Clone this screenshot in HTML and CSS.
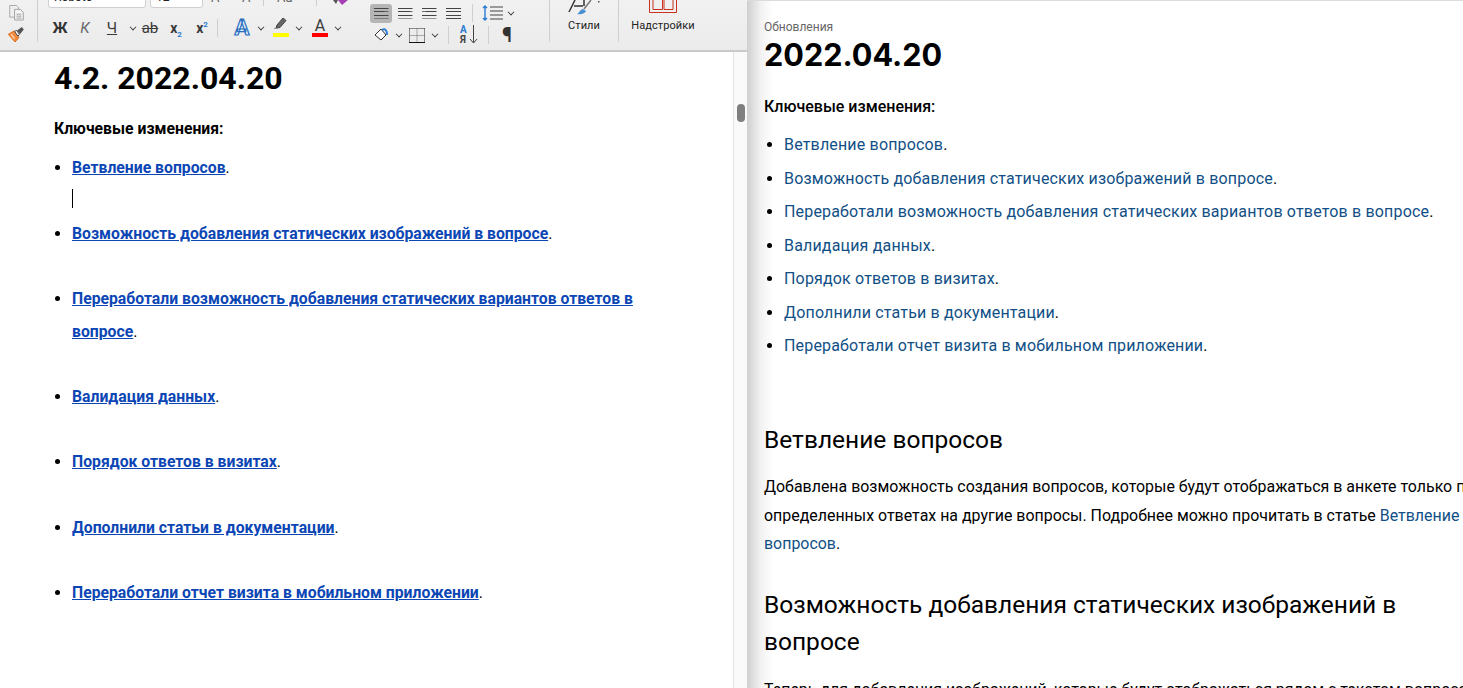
FILE: index.html
```html
<!DOCTYPE html>
<html lang="ru">
<head>
<meta charset="UTF-8">
<title>Обновления</title>
<link rel="stylesheet" href="styles.css">
</head>
<body>
<div class="app">
    <div class="word">
        <div class="ribbon">
            <div class="group group-paste">
                <svg width="17" height="16" viewBox="0 0 17 16"><path d="M1.500.5h7l2 2v10h-9z" fill="#efefef" stroke="#a8a8a8"/><path d="M6.500 4.500h6l3 3v8h-9z" fill="#f4f4f4" stroke="#a0a0a0"/><path d="M8.500 9.500h5M8.500 11.500h5M8.500 13.500h5" stroke="#a0a0a0"/></svg>
                <svg width="17" height="16" viewBox="0 0 17 16"><path d="M0 7.500l6-3.500 5 7-4 4.500z" fill="#f08a3c" stroke="#e0701f"/><path d="M3 7.500l3.500 4.500" stroke="#fbd3b0" stroke-width="1.500"/><path d="M6.500 4.500l2-1 3 4-1.500 2z" fill="#fff" stroke="#444"/><path d="M9 3.500l5-3.500 2 2.500-4 5z" fill="#555"/></svg>
            </div>
            <div class="group group-font">
                <div class="row-top">
                    <span class="select select-font">Roboto</span>
                    <span class="select select-size">12</span>
                    <span class="top-glyph top-a1">A</span>
                    <span class="top-glyph top-a2">A</span>
                    <span class="v-sep"></span>
                    <span class="top-glyph top-aa">Aa</span>
                    <span class="v-sep"></span>
                    <svg class="top-clear" width="16" height="6" viewBox="0 0 16 6"><path d="M0 0l3 4 2-4z" fill="#555"/><path d="M5 0l4 5 6-5z" fill="#a33fb5"/></svg>
                </div>
                <div class="row-bottom">
                    <span class="tool t-bold">Ж</span>
                    <span class="tool t-italic">К</span>
                    <span class="tool t-under">Ч</span>
                    <span class="chev chev-under"></span>
                    <span class="tool t-strike">ab</span>
                    <span class="tool t-script">x<sub>2</sub></span>
                    <span class="tool t-script">x<sup>2</sup></span>
                    <span class="v-sep v-sep-gap"></span>
                    <span class="tool t-effect">A</span>
                    <span class="chev"></span>
                    <span class="tool t-color">
                        <svg width="16" height="12" viewBox="0 0 16 12"><path d="M3 11l1-3 6-7 3 2.500-6 7z" fill="#666" stroke="#444"/><path d="M1 11.500h4" stroke="#999"/></svg>
                        <i class="swatch swatch-yellow"></i>
                    </span>
                    <span class="chev chev-color"></span>
                    <span class="tool t-color t-fontcolor">A<i class="swatch swatch-red"></i></span>
                    <span class="chev chev-color"></span>
                </div>
            </div>
            <div class="group group-para">
                <div class="para-row">
                    <span class="align active"><i class="lines lines-left"></i></span>
                    <span class="align"><i class="lines lines-center"></i></span>
                    <span class="align"><i class="lines lines-right"></i></span>
                    <span class="align"><i class="lines lines-just"></i></span>
                    <span class="v-sep v-sep-para"></span>
                    <span class="spacing">
                        <svg width="22" height="16" viewBox="0 0 22 16"><path d="M3 1v14M1 3l2-2 2 2M1 13l2 2 2-2" fill="none" stroke="#2b7cd3" stroke-width="1.400"/><path d="M8 2h13M8 6h13M8 10h13M8 14h13" stroke="#444"/></svg>
                    </span>
                    <span class="chev chev-spacing"></span>
                </div>
                <div class="para-row para-row-2">
                    <svg class="fill" width="15" height="14" viewBox="0 0 15 14"><path d="M1 7l6-6 5 6-5 5z" fill="#fafafa" stroke="#333"/><path d="M8 2c3-2 5 0 5 5" fill="none" stroke="#2b7cd3" stroke-width="1.800"/></svg>
                    <span class="chev chev-fill"></span>
                    <svg class="borders" width="16" height="15" viewBox="0 0 16 15"><path d="M.5.5h15M.5.5v14M15.500.5v14" fill="none" stroke="#222" stroke-dasharray="1 1"/><path d="M8 .5v14M.5 7.500h15" stroke="#666" stroke-dasharray="1 1"/><path d="M0 14.500h16" stroke="#111"/></svg>
                    <span class="chev chev-border"></span>
                    <span class="v-sep v-sep-sort"></span>
                    <span class="sort"><b>A</b><b class="sort-ya">Я</b><svg width="9" height="19" viewBox="0 0 9 19"><path d="M4.500 0v18M1 14l3.500 4L8 14" fill="none" stroke="#444"/></svg></span>
                    <span class="v-sep v-sep-sort2"></span>
                    <span class="pilcrow">¶</span>
                </div>
            </div>
            <div class="group group-big group-styles">
                <svg width="36" height="15" viewBox="0 0 36 15"><path d="M3 12L9 0M18 0v6M8 6h9" fill="none" stroke="#333" stroke-width="1.500"/><path d="M11 14c2 0 2-4 6-5l3 2c-1 2-4 4-9 3z" fill="#4a8fd0"/><path d="M18 9l7-9" stroke="#777" stroke-width="1.500"/><path d="M32 1h1.500v1.500H32z" fill="#555"/></svg>
                <span class="big-label">Стили</span>
            </div>
            <div class="group group-big group-addins">
                <svg width="28" height="13" viewBox="0 0 28 13"><path d="M.5 0v12.500h27V0" fill="none" stroke="#c8321e"/><path d="M4 0v9.500h9.500V0M15 0v9.500h9V0" fill="none" stroke="#c8321e"/></svg>
                <span class="big-label">Надстройки</span>
            </div>
        </div>
        <div class="doc-wrap">
            <div class="doc">
                <h1 class="doc-title">4.2. 2022.04.20</h1>
                <p class="doc-lead">Ключевые изменения:</p>
                <ul class="doc-list">
                    <li><a href="#">Ветвление вопросов</a>.<span class="caret"></span></li>
                    <li><a href="#">Возможность добавления статических изображений в вопросе</a>.</li>
                    <li><a href="#">Переработали возможность добавления статических вариантов ответов в вопросе</a>.</li>
                    <li><a href="#">Валидация данных</a>.</li>
                    <li><a href="#">Порядок ответов в визитах</a>.</li>
                    <li><a href="#">Дополнили статьи в документации</a>.</li>
                    <li><a href="#">Переработали отчет визита в мобильном приложении</a>.</li>
                </ul>
            </div>
            <div class="scrollbar"><div class="thumb"></div></div>
        </div>
    </div>
    <div class="preview">
        <div class="crumb">Обновления</div>
        <h1 class="pv-title">2022.04.20</h1>
        <p class="pv-lead">Ключевые изменения:</p>
        <ul class="pv-list">
            <li><a href="#">Ветвление вопросов</a>.</li>
            <li><a href="#">Возможность добавления статических изображений в вопросе</a>.</li>
            <li><a href="#">Переработали возможность добавления статических вариантов ответов в вопросе</a>.</li>
            <li><a href="#">Валидация данных</a>.</li>
            <li><a href="#">Порядок ответов в визитах</a>.</li>
            <li><a href="#">Дополнили статьи в документации</a>.</li>
            <li><a href="#">Переработали отчет визита в мобильном приложении</a>.</li>
        </ul>
        <h2 class="pv-h2 pv-h2-first">Ветвление вопросов</h2>
        <p class="pv-text">Добавлена возможность создания вопросов, которые будут отображаться в анкете только при определенных ответах на другие вопросы. Подробнее можно прочитать в статье <a href="#">Ветвление вопросов</a>.</p>
        <h2 class="pv-h2">Возможность добавления статических изображений в вопросе</h2>
        <p class="pv-text">Теперь для добавления изображений, которые будут отображаться рядом с текстом вопроса</p>
    </div>
</div>
</body>
</html>
```

FILE: styles.css
```css
html, body {
    margin: 0;
    padding: 0;
    height: 100%;
    overflow: hidden;
    background: #fff;
}
.app {
    display: flex;
    height: 688px;
    font-family: Roboto, "Noto Sans", sans-serif;
    color: #000;
}
a {
    color: inherit;
}

/* left window */
.word {
    width: 747px;
    flex: none;
    display: flex;
    flex-direction: column;
}
.ribbon {
    height: 50px;
    flex: none;
    display: flex;
    background: linear-gradient(#f1f1f1, #ebebeb);
    border-bottom: 2px solid #c9c9c9;
    overflow: hidden;
    color: #3a3a3a;
}
.group {
    flex: none;
    box-sizing: border-box;
    height: 42px;
    border-right: 1px solid #cfcfcf;
}
.group-paste {
    width: 38px;
    display: flex;
    flex-direction: column;
    align-items: center;
    padding: 5px 5px 0 0;
    gap: 6px;
}
.group-font {
    width: 322px;
    padding-left: 10px;
    border-right: 0;
}
.row-top {
    height: 9px;
    display: flex;
    align-items: flex-start;
}
.select {
    box-sizing: border-box;
    height: 18px;
    margin-top: -10px;
    background: #fff;
    border: 1px solid #cfcfcf;
    border-radius: 3px;
    font-size: 12px;
    line-height: 12px;
    padding-left: 5px;
    color: #222;
    flex: none;
}
.select-font {
    width: 98px;
    margin-right: 4px;
}
.select-size {
    width: 53px;
    margin-right: 8px;
}
.top-glyph {
    font-size: 13px;
    line-height: 13px;
    height: 13px;
    margin-top: -9px;
    color: #666;
    display: block;
}
.top-a1 {
    width: 31px;
}
.top-a2 {
    width: 21px;
}
.top-aa {
    width: 52px;
    padding-left: 13px;
    box-sizing: border-box;
}
.top-clear {
    margin-left: 16px;
}
.row-top .v-sep {
    height: 6px;
}
.row-bottom {
    display: flex;
    align-items: center;
    height: 24px;
    margin-top: 7px;
}
.tool {
    flex: none;
    text-align: center;
    font-size: 15px;
    line-height: 20px;
}
.t-bold {
    width: 24px;
    font-weight: 700;
    color: #333;
}
.t-italic {
    width: 26px;
    font-style: italic;
    color: #666;
}
.t-under {
    width: 28px;
    text-decoration: underline;
}
.chev-under {
    margin: -3px 7px 0 1px;
}
.t-strike {
    width: 26px;
    text-decoration: line-through;
    margin-left: -3px;
}
.t-script {
    width: 26px;
    font-weight: 700;
    font-size: 14px;
}
.t-script sub, .t-script sup {
    font-size: 8px;
    color: #2b7cd3;
    line-height: 0;
}
.t-effect {
    width: 24px;
    margin-left: 12px;
    font-size: 22px;
    font-weight: 700;
    color: #e6f0fa;
    -webkit-text-stroke: 1.2px #2b6fc0;
}
.t-color {
    width: 16px;
    height: 20px;
    position: relative;
    line-height: 16px;
    margin-left: 5px;
}
.t-fontcolor {
    font-size: 16px;
    margin-left: 6px;
}
.t-color svg {
    display: block;
    margin: -1px auto 0;
}
.swatch {
    display: block;
    position: absolute;
    left: 0;
    right: 0;
    bottom: 1px;
    height: 4px;
}
.swatch-yellow {
    background: #ffff00;
}
.swatch-red {
    background: #ff0000;
}
.chev {
    flex: none;
    width: 6px;
    height: 6px;
    border-right: 1.6px solid #333;
    border-bottom: 1.6px solid #333;
    transform: rotate(45deg) scale(.8);
    margin: -3px 4px 0 4px;
    box-sizing: border-box;
}
.chev-color {
    margin-left: 7px;
    margin-right: 4px;
}
.v-sep {
    flex: none;
    width: 1px;
    height: 18px;
    background: #cfcfcf;
}
.v-sep-gap {
    margin: 0 0 0 2px;
}

.group-para {
    width: 190px;
    padding-left: 10px;
}
.para-row {
    display: flex;
    align-items: center;
    height: 20px;
    margin-top: 3px;
}
.para-row-2 {
    margin-top: 1px;
    height: 22px;
}
.align {
    flex: none;
    box-sizing: border-box;
    width: 22px;
    height: 19px;
    margin-right: 2px;
    border-radius: 3px;
    display: flex;
    align-items: center;
    justify-content: center;
}
.align.active {
    background: #b5b5b5;
}
.lines {
    display: block;
    width: 15px;
    height: 11px;
    background: repeating-linear-gradient(#444 0 1px, transparent 1px 3.330px);
}
.lines-left {
    clip-path: polygon(0 0, 100% 0, 100% 15%, 70% 15%, 70% 35%, 100% 35%, 100% 100%, 0 100%);
}
.lines-center {
    clip-path: polygon(0 0, 100% 0, 100% 15%, 85% 15%, 85% 35%, 100% 35%, 100% 100%, 0 100%);
}
.lines-right {
    clip-path: polygon(0 0, 100% 0, 100% 15%, 100% 35%, 100% 100%, 0 100%, 0 35%, 30% 35%, 30% 15%, 0 15%);
}
.v-sep-para {
    margin: 0 6px 0 6px;
}
.spacing {
    flex: none;
    height: 16px;
    margin-left: 3px;
}
.chev-spacing {
    margin-left: 4px;
}
.fill {
    margin-left: 4px;
}
.chev-fill {
    margin-left: 7px;
    margin-right: 7px;
}
.chev-border {
    margin-left: 7px;
    margin-right: 7px;
}
.v-sep-sort {
    margin: 0 11px 0 3px;
}
.sort {
    flex: none;
    width: 20px;
    height: 20px;
    position: relative;
    font-size: 10px;
    line-height: 10px;
    color: #2b7cd3;
}
.sort b {
    display: block;
}
.sort .sort-ya {
    color: #444;
}
.sort svg {
    position: absolute;
    left: 9px;
    top: 0;
}
.v-sep-sort2 {
    margin: 0 13px 0 8px;
}
.pilcrow {
    font-size: 20px;
    line-height: 20px;
    font-weight: 700;
    color: #333;
}

.group-big {
    display: flex;
    flex-direction: column;
    align-items: center;
}
.group-styles {
    width: 69px;
}
.group-addins {
    width: 90px;
    border-right: 0;
    padding-right: 2px;
}
.big-label {
    font-size: 11px;
    line-height: 14px;
    margin-top: 4px;
    color: #222;
    letter-spacing: .1px;
}
.group-addins svg {
    margin-bottom: 6px;
}
.group-addins .big-label {
    margin-top: 0;
}

/* document */
.doc-wrap {
    flex: 1;
    display: flex;
    min-height: 0;
}
.doc {
    flex: 1;
    box-sizing: border-box;
    padding: 8px 93px 0 54px;
    overflow: hidden;
}
.doc-title {
    font-size: 32px;
    line-height: 36px;
    margin: 0;
}
.doc-lead {
    font-size: 15.750px;
    font-weight: 700;
    line-height: 32.700px;
    margin: 17px 0 6px;
}
.doc-list {
    margin: 0;
    padding-left: 18px;
    font-size: 15.750px;
    line-height: 32.700px;
}
.doc-list li {
    margin-bottom: 32.700px;
}
.doc-list a {
    color: #0c46b5;
    font-weight: 700;
}
.doc-list li:first-child {
    margin-bottom: 0;
    height: 65.900px;
    position: relative;
}
.caret {
    position: absolute;
    left: 0;
    top: 37px;
    width: 1px;
    height: 19px;
    background: #000;
}
.scrollbar {
    width: 14px;
    flex: none;
    box-sizing: border-box;
    background: #fafafa;
    border-left: 1px solid #e4e4e4;
    padding: 52px 0 0 3px;
}
.thumb {
    width: 8px;
    height: 18px;
    border-radius: 4px;
    background: #7f7f7f;
}

/* right window */
.preview {
    flex: 1;
    min-width: 0;
    box-sizing: border-box;
    padding: 18px 0 0 17px;
    border-top: 1px solid #dcdcdc;
    background: linear-gradient(90deg, #cfcfcf 0, #f2f2f2 14px, #fff 26px);
    overflow: hidden;
    font-size: 16px;
}
.crumb {
    font-size: 12px;
    line-height: 16px;
    color: #666;
}
.pv-title {
    font-family: Inter, Roboto, sans-serif;
    font-size: 30.600px;
    line-height: 40px;
    margin: 0;
    font-weight: 700;
}
.pv-lead {
    line-height: 24px;
    margin: 20px 0 0;
    font-weight: 500;
}
.pv-list {
    margin: 9px 0 0;
    padding-left: 20px;
    line-height: 33.500px;
    white-space: nowrap;
    letter-spacing: .17px;
}
.pv-list a, .pv-text a {
    color: #114f86;
    text-decoration: none;
}
.pv-h2 {
    font-size: 24.500px;
    line-height: 37.500px;
    font-weight: 400;
    margin: 27px 0 0;
    width: 680px;
}
.pv-h2-first {
    margin-top: 58px;
}
.pv-text {
    font-size: 15.950px;
    line-height: 28.500px;
    margin: 15px 0 0;
    width: 740px;
}
```
